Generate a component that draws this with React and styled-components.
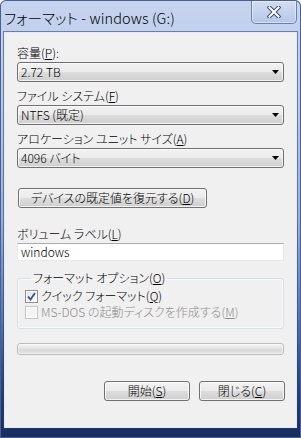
import React from "react";
import styled, { createGlobalStyle } from "styled-components";

const Global = createGlobalStyle`
  html, body { margin: 0; padding: 0; }
  body {
    width: 301px;
    height: 438px;
    overflow: hidden;
    font-family: "Noto Sans CJK JP", "Noto Sans", sans-serif;
    font-feature-settings: "palt";
    font-weight: 300;
  }
`;

const Window = styled.div`
  width: 301px;
  height: 438px;
  box-sizing: border-box;
  display: flex;
  flex-direction: column;
  padding: 0 4px 10px 4px;
  background: linear-gradient(
    to bottom,
    #c6d4ef 0%,
    #b6c7e9 25%,
    #98b0dd 50%,
    #5677b9 72%,
    #26417e 88%,
    #172c60 100%
  );
  box-shadow: inset 0 0 0 1px #4a5f8c, inset 0 -4px 0 -3px #8aa0cf;
  border-radius: 6px 6px 0 0;
`;

const TitleBar = styled.div`
  height: 32px;
  display: flex;
  align-items: flex-start;
  justify-content: space-between;
`;

const Title = styled.div`
  font-size: 14.5px;
  line-height: 18px;
  color: #000;
  padding-top: 9px;
  letter-spacing: 0.1px;
`;

const CloseButton = styled.div`
  width: 46px;
  height: 23px;
  box-sizing: border-box;
  margin-top: 1px;
  border: 1px solid #6e7fa6;
  border-top: none;
  border-radius: 0 0 5px 5px;
  background: linear-gradient(to bottom, #d3ddf1 0%, #c4d2ee 50%, #b6c6e8 100%);
  box-shadow: inset 0 0 0 1px rgba(255, 255, 255, 0.45);
  display: flex;
  align-items: center;
  justify-content: center;
`;

const Panel = styled.div`
  flex: 1;
  box-sizing: border-box;
  background: #f0f0f0;
  border: 1px solid #e4eaf5;
  box-shadow: 0 0 0 1px rgba(40, 60, 110, 0.55);
  padding: 12px 12px 0 12px;
  display: flex;
  flex-direction: column;
`;

const Label = styled.div`
  font-size: 12px;
  line-height: 16px;
  height: 16px;
  color: ${(p) => (p.$disabled ? "#8f8f8f" : "#000")};
  white-space: nowrap;
  margin-top: ${(p) => p.$top || 0}px;
  margin-bottom: 1px;
`;

const Select = styled.div`
  height: 20px;
  box-sizing: border-box;
  border: 1px solid #707070;
  border-radius: 3px;
  background: linear-gradient(to bottom, #f2f2f2 0%, #ebebeb 50%, #dddddd 51%, #cfcfcf 100%);
  box-shadow: inset 0 0 0 1px rgba(255, 255, 255, 0.7);
  display: flex;
  align-items: center;
  justify-content: space-between;
  padding: 0 4px 0 3px;
  font-size: 12px;
  line-height: 16px;
  color: #000;
`;

const Field = styled.div`
  height: 18px;
  box-sizing: border-box;
  background: #fff;
  border: 1px solid #e3e9ef;
  border-top-color: #abadb3;
  padding: 0 3px;
  font-size: 12px;
  line-height: 16px;
  color: #000;
`;

const Button = styled.div`
  width: ${(p) => p.$w}px;
  height: 20px;
  box-sizing: border-box;
  border: 1px solid #707070;
  border-radius: 3px;
  background: linear-gradient(to bottom, #f2f2f2 0%, #ebebeb 50%, #dddddd 51%, #cfcfcf 100%);
  box-shadow: inset 0 0 0 1px rgba(252, 252, 252, 0.8);
  display: flex;
  align-items: center;
  justify-content: center;
  font-size: 12px;
  line-height: 16px;
  color: #000;
  margin-top: ${(p) => p.$top || 0}px;
  margin-left: ${(p) => p.$left || 0}px;
`;

const Group = styled.fieldset`
  margin: 9px 0 0 0;
  padding: 2px 7px 8px 7px;
  border: 1px solid #d5dfe5;
  border-radius: 3px;
  box-shadow: inset 0 0 0 1px rgba(255, 255, 255, 0.6);
`;

const Legend = styled.legend`
  font-size: 12px;
  line-height: 16px;
  padding: 0 2px;
  margin-left: 6px;
  color: #000;
`;

const CheckRow = styled.div`
  display: flex;
  align-items: center;
  height: 16px;
  gap: 3px;
  font-size: 12px;
  line-height: 16px;
  color: ${(p) => (p.$disabled ? "#8d8d8d" : "#000")};
  white-space: nowrap;
`;

const Box = styled.span`
  width: 13px;
  height: 13px;
  box-sizing: border-box;
  border: 1px solid ${(p) => (p.$disabled ? "#c4c4c4" : "#8e8f8f")};
  background: ${(p) =>
    p.$disabled
      ? "#f4f4f4"
      : "linear-gradient(135deg, #dcdfe4 0%, #f4f5f6 70%, #ffffff 100%)"};
  box-shadow: inset 0 0 0 1px #fff;
  display: flex;
  align-items: center;
  justify-content: center;
  flex: none;
`;

const Progress = styled.div`
  margin-top: 14px;
  height: 12px;
  box-sizing: border-box;
  border: 1px solid #bcbcbc;
  border-radius: 3px;
  background: linear-gradient(to bottom, #f3f3f3 0%, #e6e6e6 40%, #d9d9d9 60%, #e4e4e4 100%);
  box-shadow: inset 0 0 0 1px rgba(255, 255, 255, 0.5);
`;

const ButtonRow = styled.div`
  display: flex;
  justify-content: flex-end;
  gap: 9px;
  margin-top: 26px;
  margin-right: -1px;
`;

const Arrow = () => (
  <svg width="7" height="4" viewBox="0 0 7 4">
    <path d="M0 0H7L3.5 4Z" fill="#000" />
  </svg>
);

const Check = () => (
  <svg width="9" height="9" viewBox="0 0 9 9">
    <path d="M1 4.5L3.5 7.5L8 1" fill="none" stroke="#3a4f8a" strokeWidth="1.8" />
  </svg>
);

const CloseX = () => (
  <svg width="14" height="12" viewBox="0 0 14 12">
    <path d="M2.5 1.5L11.5 10.5M11.5 1.5L2.5 10.5" stroke="#3d4a63" strokeWidth="4" strokeLinecap="square" />
    <path d="M2.5 1.5L11.5 10.5M11.5 1.5L2.5 10.5" stroke="#ffffff" strokeWidth="2" strokeLinecap="square" />
  </svg>
);

export default function App() {
  return (
    <>
      <Global />
      <Window>
        <TitleBar>
          <Title>フォーマット - windows (G:)</Title>
          <CloseButton>
            <CloseX />
          </CloseButton>
        </TitleBar>
        <Panel>
          <Label>
            容量(<u>P</u>):
          </Label>
          <Select>
            <span>2.72 TB</span>
            <Arrow />
          </Select>
          <Label $top={6}>
            ファイル システム(<u>F</u>)
          </Label>
          <Select>
            <span>NTFS (既定)</span>
            <Arrow />
          </Select>
          <Label $top={6}>
            アロケーション ユニット サイズ(<u>A</u>)
          </Label>
          <Select>
            <span>4096 バイト</span>
            <Arrow />
          </Select>
          <Button $w={189} $top={20} $left={1}>
            デバイスの既定値を復元する(<u>D</u>)
          </Button>
          <Label $top={18}>
            ボリューム ラベル(<u>L</u>)
          </Label>
          <Field>windows</Field>
          <Group>
            <Legend>
              フォーマット オプション(<u>O</u>)
            </Legend>
            <CheckRow>
              <Box>
                <Check />
              </Box>
              <span>
                クイック フォーマット(<u>Q</u>)
              </span>
            </CheckRow>
            <CheckRow $disabled>
              <Box $disabled />
              <span>
                MS-DOS の起動ディスクを作成する(<u>M</u>)
              </span>
            </CheckRow>
          </Group>
          <Progress />
          <ButtonRow>
            <Button $w={86}>
              開始(<u>S</u>)
            </Button>
            <Button $w={86}>
              閉じる(<u>C</u>)
            </Button>
          </ButtonRow>
        </Panel>
      </Window>
    </>
  );
}
